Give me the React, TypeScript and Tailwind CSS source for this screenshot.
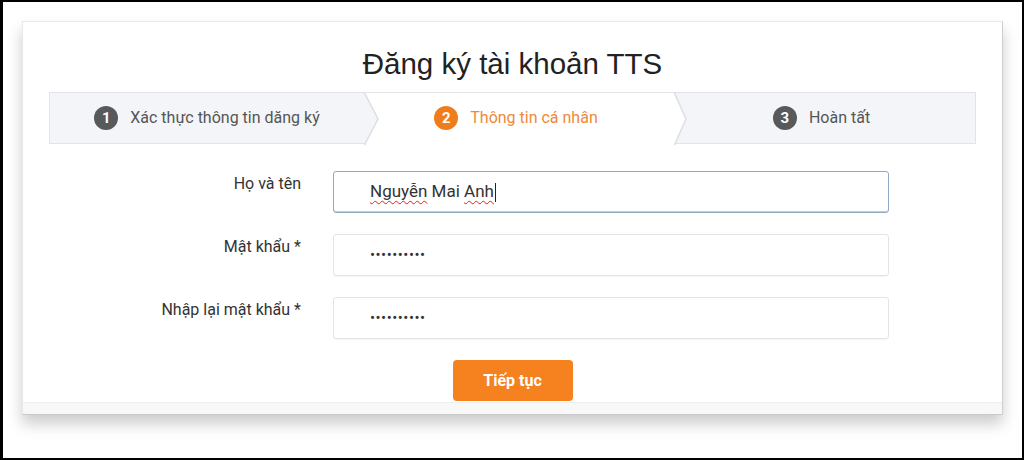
import React from "react"

const steps = [
  { n: 1, label: "Xác thực thông tin dăng ký", active: false, w: "w-[314px]" },
  { n: 2, label: "Thông tin cá nhân", active: true, w: "w-[304px]" },
  { n: 3, label: "Hoàn tất", active: false, w: "flex-1" },
]

function StepBar() {
  return (
    <div className="relative flex h-[52px] border border-[#e1e4e8] bg-[#f3f5f8]">
      {/* chevrons + active segment */}
      <svg className="absolute inset-0" width="926" height="52" viewBox="0 0 926 52">
        <polygon points="314,-1 624,-1 636,26 624,53 314,53 328,26" fill="#ffffff" />
        <polyline points="314,-1 328,26 314,53" fill="none" stroke="#dcdfe3" strokeWidth="1.5" />
        <polyline points="624,-1 636,26 624,53" fill="none" stroke="#dcdfe3" strokeWidth="1.5" />
      </svg>
      {steps.map((s) => (
        <div key={s.n} className={`relative flex items-center justify-center gap-3 ${s.w}`}>
          <span
            className={`flex h-6 w-6 items-center justify-center rounded-full text-[15px] font-bold text-white ${
              s.active ? "bg-[#f07d1c]" : "bg-[#58595b]"
            }`}
          >
            {s.n}
          </span>
          <span className={`text-[16px] ${s.active ? "text-[#ec8a3a]" : "text-[#555555]"}`}>{s.label}</span>
        </div>
      ))}
    </div>
  )
}

function Row({ label, children }: { label: string; children: React.ReactNode }) {
  return (
    <div className="flex">
      <div className="w-[278px] pt-[3px] text-right text-[16px] leading-5 text-[#333333]">{label}</div>
      <div className="ml-[32px] w-[556px]">{children}</div>
    </div>
  )
}

export default function App() {
  return (
    <div
      className="h-[460px] w-[1024px] overflow-hidden border-2 border-l-[3px] border-black bg-white"
      style={{ fontFamily: "Roboto, 'Liberation Sans', Arial, sans-serif" }}
    >
      <div className="ml-[19px] mt-[19px] w-[981px] border border-[#e6e8eb] border-b-[#c9c9c9] border-r-[#cfcfcf] bg-white shadow-[0_9px_14px_rgba(0,0,0,0.2)]">
        <div className="px-[26px] pt-[25px]">
          <h1
            className="text-center text-[29.5px] leading-[34px] text-[#222222]"
            style={{ fontFamily: "'Liberation Sans', Arial, sans-serif" }}
          >
            Đăng ký tài khoản TTS
          </h1>
          <div className="mt-[11px]">
            <StepBar />
          </div>
        </div>

        <div className="mt-[27px] flex flex-col gap-[21px]">
          <Row label="Họ và tên">
            <div className="flex h-[42px] items-center rounded-[3px] border border-[#8eaac2] pl-[36px] text-[17px] text-[#333333] shadow-[inset_0_-1px_0_rgba(90,110,130,0.35)]">
              <span className="underline decoration-[#e02020] decoration-wavy decoration-1 underline-offset-[3px]">Nguyễn</span>
              <span>&nbsp;Mai&nbsp;</span>
              <span className="underline decoration-[#e02020] decoration-wavy decoration-1 underline-offset-[3px]">Anh</span>
              <span className="ml-px inline-block h-[19px] w-px bg-[#222222]" />
            </div>
          </Row>
          <Row label="Mật khẩu *">
            <div className="flex h-[42px] items-center rounded-[3px] border border-[#e4e4e4] pl-[36px] text-[15px] tracking-[0.5px] text-[#333333] shadow-[0_1px_1px_rgba(0,0,0,0.04)]">
              ••••••••••
            </div>
          </Row>
          <Row label="Nhập lại mật khẩu *">
            <div className="flex h-[42px] items-center rounded-[3px] border border-[#e4e4e4] pl-[36px] text-[15px] tracking-[0.5px] text-[#333333] shadow-[0_1px_1px_rgba(0,0,0,0.04)]">
              ••••••••••
            </div>
          </Row>
        </div>

        <div className="mt-[21px] flex justify-center">
          <button className="h-[41px] w-[120px] rounded-[4px] bg-[#f5821f] text-[16px] font-bold text-white">
            Tiếp tục
          </button>
        </div>

        <div className="mt-px h-[12px] border-t border-[#efefef] bg-[#f8f8f8]" />
      </div>
    </div>
  )
}
